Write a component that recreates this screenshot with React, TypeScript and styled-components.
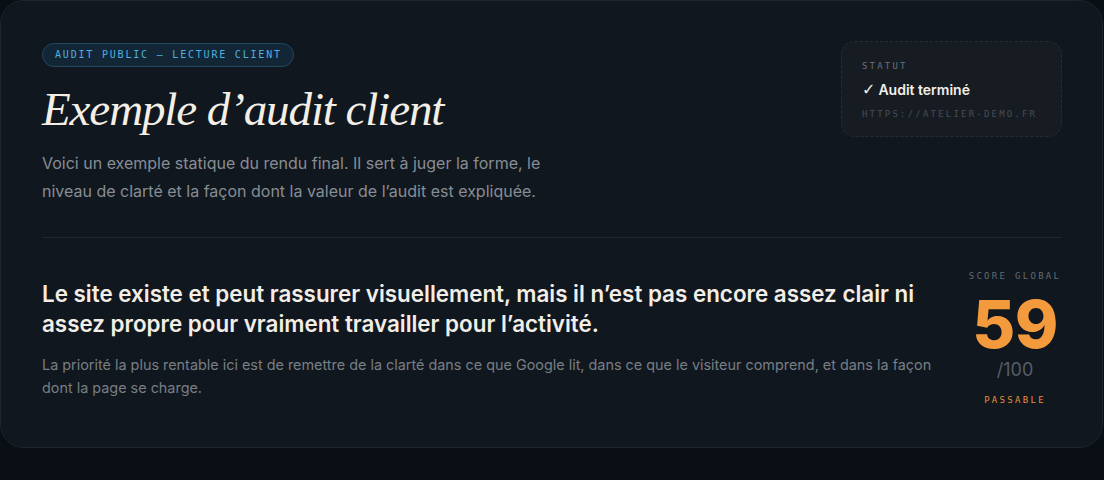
import React from "react";
import styled, { createGlobalStyle } from "styled-components";

const GlobalStyle = createGlobalStyle`
  html, body {
    margin: 0;
    padding: 0;
    background: #0a0f16;
  }
  body {
    font-family: Inter, "Noto Sans", sans-serif;
    -webkit-font-smoothing: antialiased;
  }
`;

const Page = styled.div`
  width: 1104px;
  height: 480px;
  background: #0a0f16;
  overflow: hidden;
`;

const Card = styled.section`
  width: 1103px;
  box-sizing: border-box;
  background: #11171e;
  border: 1px solid #1e252d;
  border-radius: 24px;
  padding: 42px 40px 42px 41px;
`;

const Header = styled.header`
  display: flex;
  justify-content: space-between;
  align-items: flex-start;
  padding-bottom: 32px;
  border-bottom: 1px solid #1f262e;
`;

const Intro = styled.div`
  display: flex;
  flex-direction: column;
  align-items: flex-start;
`;

const Mono = styled.span<{ $color: string; $size?: number; $spacing?: number }>`
  font-family: "DejaVu Sans Mono", "Liberation Mono", monospace;
  font-size: ${(p) => p.$size ?? 10}px;
  letter-spacing: ${(p) => p.$spacing ?? 2}px;
  text-transform: uppercase;
  color: ${(p) => p.$color};
  line-height: 1;
`;

const Badge = styled.div`
  display: inline-flex;
  align-items: center;
  height: 24px;
  box-sizing: border-box;
  padding: 0 11px 0 12px;
  border-radius: 12px;
  background: #132636;
  border: 1px solid #1f4860;
`;

const Title = styled.h1`
  margin: 16px 0 0 0;
  font-family: "Liberation Serif", "DejaVu Serif", serif;
  font-style: italic;
  font-weight: 400;
  font-size: 47px;
  line-height: 52px;
  letter-spacing: -1.1px;
  color: #f4efe6;
`;

const Lead = styled.p`
  margin: 14px 0 0 0;
  max-width: 520px;
  font-size: 16px;
  line-height: 28px;
  color: #878d95;
`;

const StatusBox = styled.aside`
  width: 221px;
  box-sizing: border-box;
  margin-top: -2px;
  padding: 20px 20px 17px 20px;
  border: 1px dashed #262c34;
  border-radius: 14px;
  background: #171c23;
  display: flex;
  flex-direction: column;
`;

const StatusValue = styled.div`
  margin: 9px 0 10px 0;
  font-size: 14px;
  font-weight: 600;
  line-height: 20px;
  color: #f3efe8;
`;

const Check = styled.span`
  font-family: "DejaVu Sans", sans-serif;
  font-size: 16px;
  font-weight: 700;
  margin-right: 3px;
`;

const Summary = styled.div`
  display: flex;
  align-items: center;
  justify-content: space-between;
  gap: 36px;
  padding-top: 34px;
`;

const Verdict = styled.div`
  flex: 1;
`;

const Headline = styled.h2`
  margin: 0;
  max-width: 880px;
  font-size: 22.4px;
  font-weight: 600;
  line-height: 30px;
  color: #f2eee7;
`;

const Detail = styled.p`
  margin: 14px 0 0 0;
  font-size: 14.4px;
  line-height: 23px;
  color: #777e86;
`;

const Score = styled.div`
  width: 94px;
  display: flex;
  flex-direction: column;
  align-items: center;
`;

const ScoreValue = styled.div`
  margin-top: 13px;
  font-size: 66px;
  font-weight: 800;
  line-height: 60px;
  letter-spacing: -0.5px;
  color: #f39a3c;
`;

const ScoreMax = styled.div`
  margin-top: 4px;
  font-size: 18px;
  line-height: 24px;
  color: #575e66;
`;

const ScoreLabel = styled.div`
  margin-top: 11px;
  line-height: 9px;
`;

export default function App() {
  return (
    <Page>
      <GlobalStyle />
      <Card>
        <Header>
          <Intro>
            <Badge>
              <Mono $color="#4fb0e0" $size={10} $spacing={1.8}>Audit public — lecture client</Mono>
            </Badge>
            <Title>Exemple d’audit client</Title>
            <Lead>
              Voici un exemple statique du rendu final. Il sert à juger la forme, le
              niveau de clarté et la façon dont la valeur de l’audit est expliquée.
            </Lead>
          </Intro>
          <StatusBox>
            <Mono $color="#6a7078" $size={9} $spacing={2.2}>Statut</Mono>
            <StatusValue><Check>✓</Check>Audit terminé</StatusValue>
            <Mono $color="#474d55" $size={9} $spacing={2.2}>https://atelier-demo.fr</Mono>
          </StatusBox>
        </Header>
        <Summary>
          <Verdict>
            <Headline>
              Le site existe et peut rassurer visuellement, mais il n’est pas encore assez clair ni
              assez propre pour vraiment travailler pour l’activité.
            </Headline>
            <Detail>
              La priorité la plus rentable ici est de remettre de la clarté dans ce que Google lit,
              dans ce que le visiteur comprend, et dans la façon dont la page se charge.
            </Detail>
          </Verdict>
          <Score>
            <Mono $color="#646a72" $size={9} $spacing={2.3}>Score global</Mono>
            <ScoreValue>59</ScoreValue>
            <ScoreMax>/100</ScoreMax>
            <ScoreLabel>
              <Mono $color="#e8913a" $size={9} $spacing={2.3}>Passable</Mono>
            </ScoreLabel>
          </Score>
        </Summary>
      </Card>
    </Page>
  );
}
